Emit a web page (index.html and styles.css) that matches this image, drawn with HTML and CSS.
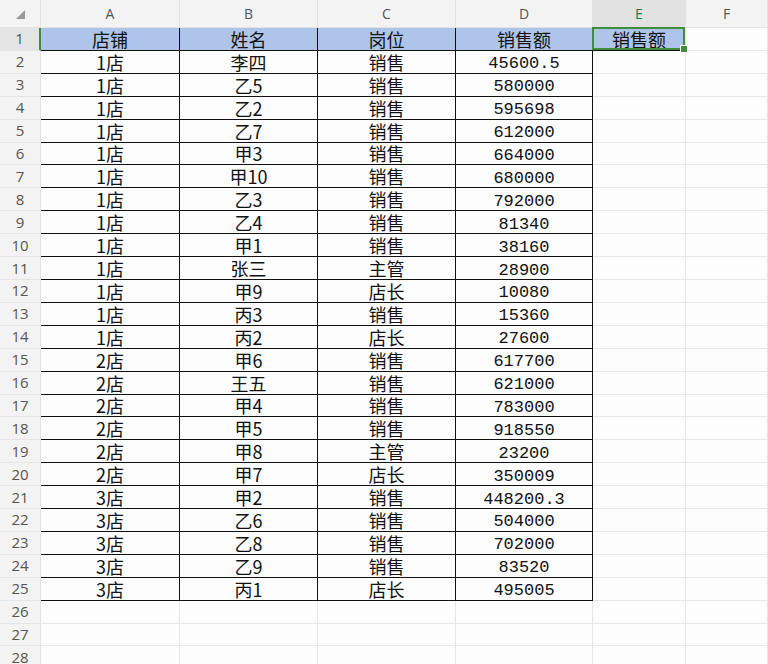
FILE: index.html
```html
<!DOCTYPE html>
<html lang="zh-CN">
<head>
<meta charset="utf-8">
<title>销售表</title>
<link rel="stylesheet" href="styles.css">
</head>
<body>
<div class="sheet">
  <div class="ch corner"><svg width="9" height="9" viewBox="0 0 9 9"><polygon points="9,0 9,9 0,9" fill="#9a9a9a"/></svg></div>
  <div class="ch">A</div><div class="ch">B</div><div class="ch">C</div><div class="ch">D</div><div class="ch sel">E</div><div class="ch">F</div>

  <div class="rh sel">1</div><div class="c d h">店铺</div><div class="c d h">姓名</div><div class="c d h">岗位</div><div class="c d h">销售额</div><div class="c d h active">销售额<span class="handle"></span></div><div class="c"></div>
  <div class="rh">2</div><div class="c d">1店</div><div class="c d">李四</div><div class="c d">销售</div><div class="c d n">45600.5</div><div class="c"></div><div class="c"></div>
  <div class="rh">3</div><div class="c d">1店</div><div class="c d">乙5</div><div class="c d">销售</div><div class="c d n">580000</div><div class="c"></div><div class="c"></div>
  <div class="rh">4</div><div class="c d">1店</div><div class="c d">乙2</div><div class="c d">销售</div><div class="c d n">595698</div><div class="c"></div><div class="c"></div>
  <div class="rh">5</div><div class="c d">1店</div><div class="c d">乙7</div><div class="c d">销售</div><div class="c d n">612000</div><div class="c"></div><div class="c"></div>
  <div class="rh">6</div><div class="c d">1店</div><div class="c d">甲3</div><div class="c d">销售</div><div class="c d n">664000</div><div class="c"></div><div class="c"></div>
  <div class="rh">7</div><div class="c d">1店</div><div class="c d">甲10</div><div class="c d">销售</div><div class="c d n">680000</div><div class="c"></div><div class="c"></div>
  <div class="rh">8</div><div class="c d">1店</div><div class="c d">乙3</div><div class="c d">销售</div><div class="c d n">792000</div><div class="c"></div><div class="c"></div>
  <div class="rh">9</div><div class="c d">1店</div><div class="c d">乙4</div><div class="c d">销售</div><div class="c d n">81340</div><div class="c"></div><div class="c"></div>
  <div class="rh">10</div><div class="c d">1店</div><div class="c d">甲1</div><div class="c d">销售</div><div class="c d n">38160</div><div class="c"></div><div class="c"></div>
  <div class="rh">11</div><div class="c d">1店</div><div class="c d">张三</div><div class="c d">主管</div><div class="c d n">28900</div><div class="c"></div><div class="c"></div>
  <div class="rh">12</div><div class="c d">1店</div><div class="c d">甲9</div><div class="c d">店长</div><div class="c d n">10080</div><div class="c"></div><div class="c"></div>
  <div class="rh">13</div><div class="c d">1店</div><div class="c d">丙3</div><div class="c d">销售</div><div class="c d n">15360</div><div class="c"></div><div class="c"></div>
  <div class="rh">14</div><div class="c d">1店</div><div class="c d">丙2</div><div class="c d">店长</div><div class="c d n">27600</div><div class="c"></div><div class="c"></div>
  <div class="rh">15</div><div class="c d">2店</div><div class="c d">甲6</div><div class="c d">销售</div><div class="c d n">617700</div><div class="c"></div><div class="c"></div>
  <div class="rh">16</div><div class="c d">2店</div><div class="c d">王五</div><div class="c d">销售</div><div class="c d n">621000</div><div class="c"></div><div class="c"></div>
  <div class="rh">17</div><div class="c d">2店</div><div class="c d">甲4</div><div class="c d">销售</div><div class="c d n">783000</div><div class="c"></div><div class="c"></div>
  <div class="rh">18</div><div class="c d">2店</div><div class="c d">甲5</div><div class="c d">销售</div><div class="c d n">918550</div><div class="c"></div><div class="c"></div>
  <div class="rh">19</div><div class="c d">2店</div><div class="c d">甲8</div><div class="c d">主管</div><div class="c d n">23200</div><div class="c"></div><div class="c"></div>
  <div class="rh">20</div><div class="c d">2店</div><div class="c d">甲7</div><div class="c d">店长</div><div class="c d n">350009</div><div class="c"></div><div class="c"></div>
  <div class="rh">21</div><div class="c d">3店</div><div class="c d">甲2</div><div class="c d">销售</div><div class="c d n">448200.3</div><div class="c"></div><div class="c"></div>
  <div class="rh">22</div><div class="c d">3店</div><div class="c d">乙6</div><div class="c d">销售</div><div class="c d n">504000</div><div class="c"></div><div class="c"></div>
  <div class="rh">23</div><div class="c d">3店</div><div class="c d">乙8</div><div class="c d">销售</div><div class="c d n">702000</div><div class="c"></div><div class="c"></div>
  <div class="rh">24</div><div class="c d">3店</div><div class="c d">乙9</div><div class="c d">销售</div><div class="c d n">83520</div><div class="c"></div><div class="c"></div>
  <div class="rh">25</div><div class="c d">3店</div><div class="c d">丙1</div><div class="c d">店长</div><div class="c d n">495005</div><div class="c"></div><div class="c"></div>
  <div class="rh">26</div><div class="c"></div><div class="c"></div><div class="c"></div><div class="c"></div><div class="c"></div><div class="c"></div>
  <div class="rh">27</div><div class="c"></div><div class="c"></div><div class="c"></div><div class="c"></div><div class="c"></div><div class="c"></div>
  <div class="rh">28</div><div class="c"></div><div class="c"></div><div class="c"></div><div class="c"></div><div class="c"></div><div class="c"></div>
</div>
</body>
</html>
```

FILE: styles.css
```css
html, body {
  margin: 0;
  padding: 0;
  background: #ffffff;
  overflow: hidden;
}

.sheet {
  display: grid;
  grid-template-columns: 41px 139px 138px 138px 137px 93px 82px;
  grid-template-rows: 28px;
  grid-auto-rows: 22.92px;
  font-family: "Noto Sans CJK SC", sans-serif;
  color: #111;
}

.sheet > div {
  box-sizing: border-box;
  display: flex;
  align-items: center;
  justify-content: center;
  line-height: 1;
  white-space: nowrap;
}

.ch {
  background: #f3f3f3;
  color: #555;
  font-family: "Open Sans", "Liberation Sans", sans-serif;
  font-size: 14px;
  border-right: 1px solid #e2e2e2;
  border-bottom: 1px solid #e2e2e2;
}

.ch.corner {
  justify-content: flex-start;
  align-items: flex-start;
  padding: 10px 0 0 16px;
}

.ch.sel {
  background: #e2e2e2;
  color: #1f7a50;
}

.rh {
  background: #f3f3f3;
  color: #555;
  font-family: "Open Sans", "Liberation Sans", sans-serif;
  font-size: 15px;
  border-bottom: 1px solid #e6e6e6;
  border-right: 1px solid #e2e2e2;
}

.rh.sel {
  background: #e4e4e4;
  border-right: 2px solid #3f8f3a;
}

.c {
  background: #fdfdfd;
  font-size: 18px;
  border-right: 1px solid #e4e7e9;
  border-bottom: 1px solid #e4e7e9;
}

.c.d {
  border-right: 1px solid #111;
  border-bottom: 1px solid #111;
}

.c.h {
  background: #aec4e8;
}

.c.n {
  font-family: "Liberation Mono", monospace;
  font-size: 17px;
  color: #111;
  padding-top: 4px;
}

.c.active {
  position: relative;
  border-right: 1px solid #e4e7e9;
}

.c.active::after {
  content: "";
  position: absolute;
  inset: -1px 0 0 -1px;
  border: 2px solid #3f8f3a;
  pointer-events: none;
}

.handle {
  position: absolute;
  right: -3px;
  bottom: -3px;
  width: 6px;
  height: 6px;
  background: #3f8f3a;
  border: 1px solid #fff;
  z-index: 2;
}
```
